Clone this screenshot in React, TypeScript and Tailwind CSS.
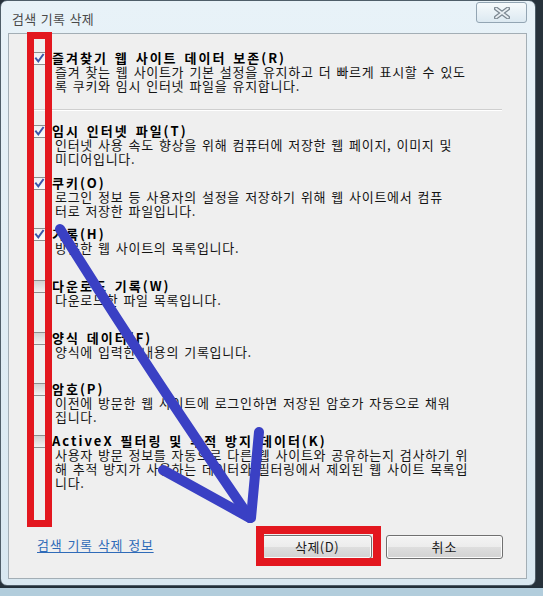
import React from "react";

function Checkbox({ checked }: { checked: boolean }) {
  return (
    <div
      className={
        "mt-[2px] w-[13px] h-[13px] shrink-0 border border-[#8e8f8f] flex items-center justify-center " +
        (checked
          ? "bg-[linear-gradient(to_bottom,#eef0f4,#fafafa)]"
          : "bg-[linear-gradient(to_bottom,#d2d2d2,#f1f1f1)]")
      }
    >
      {checked && (
        <svg width="11" height="11" viewBox="0 0 11 11">
          <path
            d="M2 5.5 L4.3 8.4 L9 1.8"
            stroke="#3c56a8"
            strokeWidth="2"
            fill="none"
            strokeLinecap="square"
          />
        </svg>
      )}
    </div>
  );
}

function Item({
  checked,
  title,
  lines,
}: {
  checked: boolean;
  title: string;
  lines: string[];
}) {
  return (
    <div className="flex min-h-[43px]">
      <Checkbox checked={checked} />
      <div className="ml-[6px]">
        <div className="font-bold leading-[15px] text-[13px] text-black tracking-[2px] [word-spacing:2px] whitespace-nowrap">
          {title}
        </div>
        {lines.map((l, i) => (
          <div
            key={i}
            className="pl-[3px] leading-[14px] text-[13px] text-[#151515] tracking-[0.7px] [word-spacing:1.5px] whitespace-nowrap"
          >
            {l}
          </div>
        ))}
      </div>
    </div>
  );
}

function Window() {
  return (
    <div className="w-[536px] h-[586px] shrink-0 rounded-[7px] border border-[#4f5e69] bg-[linear-gradient(to_bottom,#e8f2f8,#d9e8f1)] flex flex-col">
      <div className="h-[32px] flex items-start">
        <div className="pl-[11px] pt-[10px] leading-[16px] text-[13px] text-[#4a4a4a] tracking-[0.3px] [word-spacing:1px]">
          검색 기록 삭제
        </div>
        <div className="ml-auto mr-[8px] mt-[1px] w-[51px] h-[21px] rounded-[3px] border border-[#93a5b3] bg-[linear-gradient(to_bottom,#f6fafc,#dce9f1)] flex items-center justify-center">
          <svg width="16" height="12" viewBox="0 0 16 12">
            <path d="M2 1.5 L14 10.5 M14 1.5 L2 10.5" stroke="#7b8791" strokeWidth="4.2" strokeLinecap="round" />
            <path d="M2 1.5 L14 10.5 M14 1.5 L2 10.5" stroke="#e9eff3" strokeWidth="1.6" strokeLinecap="round" />
          </svg>
        </div>
      </div>
      <div className="ml-[7px] w-[519px] h-[546px] border border-[#a3aeb5] bg-[#efefef] flex flex-col">
        <div className="pl-[24px] pt-[16px]">
          <Item
            checked
            title="즐겨찾기 웹 사이트 데이터 보존(R)"
            lines={[
              "즐겨 찾는 웹 사이트가 기본 설정을 유지하고 더 빠르게 표시할 수 있도",
              "록 쿠키와 임시 인터넷 파일을 유지합니다.",
            ]}
          />
        </div>
        <div className="ml-[24px] mt-[16px] w-[469px] h-[2px] border-t border-[#cfcfcf] border-b border-b-white" />
        <div className="pl-[24px] pt-[12px] flex flex-col gap-[8.7px]">
          <Item
            checked
            title="임시 인터넷 파일(T)"
            lines={[
              "인터넷 사용 속도 향상을 위해 컴퓨터에 저장한 웹 페이지, 이미지 및",
              "미디어입니다.",
            ]}
          />
          <Item
            checked
            title="쿠키(O)"
            lines={[
              "로그인 정보 등 사용자의 설정을 저장하기 위해 웹 사이트에서 컴퓨",
              "터로 저장한 파일입니다.",
            ]}
          />
          <Item checked title="기록(H)" lines={["방문한 웹 사이트의 목록입니다."]} />
          <Item checked={false} title="다운로드 기록(W)" lines={["다운로드한 파일 목록입니다."]} />
          <Item checked={false} title="양식 데이터(F)" lines={["양식에 입력한 내용의 기록입니다."]} />
          <Item
            checked={false}
            title="암호(P)"
            lines={[
              "이전에 방문한 웹 사이트에 로그인하면 저장된 암호가 자동으로 채워",
              "집니다.",
            ]}
          />
          <Item
            checked={false}
            title="ActiveX 필터링 및 추적 방지 데이터(K)"
            lines={[
              "사용자 방문 정보를 자동으로 다른 웹 사이트와 공유하는지 검사하기 위",
              "해 추적 방지가 사용하는 데이터와 필터링에서 제외된 웹 사이트 목록입",
              "니다.",
            ]}
          />
        </div>
        <div className="mt-auto pb-[19px] pl-[28px] pr-[23px] flex items-center">
          <span className="mb-[4px] text-[13px] leading-[16px] text-[#2f6bb8] underline underline-offset-2 tracking-[0.7px] [word-spacing:1.5px]">
            검색 기록 삭제 정보
          </span>
          <div className="ml-auto flex gap-[14px]">
            <div className="w-[110px] h-[24px] rounded-[3px] border border-[#707070] bg-[linear-gradient(to_bottom,#f4f4f4_0%,#ececec_50%,#dedede_50%,#d2d2d2_100%)] shadow-[inset_0_0_0_1px_#fbfbfb] flex items-center justify-center text-[13px] text-[#1a1a1a] tracking-[0.5px]">
              삭제(D)
            </div>
            <div className="w-[117px] h-[24px] rounded-[3px] border border-[#707070] bg-[linear-gradient(to_bottom,#f4f4f4_0%,#ececec_50%,#dedede_50%,#d2d2d2_100%)] shadow-[inset_0_0_0_1px_#fbfbfb] flex items-center justify-center text-[13px] text-[#1a1a1a] tracking-[1px]">
              취소
            </div>
          </div>
        </div>
      </div>
    </div>
  );
}

export default function App() {
  return (
    <div className="relative w-[543px] h-[596px] overflow-hidden bg-[#27323b] font-['Noto_Sans_CJK_KR','Noto_Sans',sans-serif]">
      <div className="flex flex-col w-[543px] h-[596px]">
        <div className="flex h-[586px]">
          <Window />
          <div className="flex-1 bg-[#27323b]" />
        </div>
        <div className="flex-1 border-t-2 border-[#23303a] bg-[#b2cddc]" />
      </div>
      {/* annotations */}
      <div className="absolute left-[27px] top-[32px] w-[25px] h-[495px] border-[7px] border-[#e3171f]" />
      <div className="absolute left-[256px] top-[526px] w-[125px] h-[40px] border-[8px] border-[#e3171f]" />
      <svg className="absolute left-0 top-0 pointer-events-none" width="543" height="596" viewBox="0 0 543 596">
        <g stroke="#3a40c4" strokeWidth="10" strokeLinecap="round" fill="none">
          <path d="M60 229 Q 145 365 250 518" />
          <path d="M163 470 L250 518" />
          <path d="M259 432 L251 518" />
        </g>
      </svg>
    </div>
  );
}
